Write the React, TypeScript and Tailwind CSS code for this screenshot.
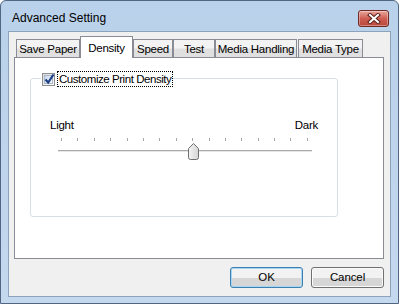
import React from "react";

const TABS = [
  { label: "Save Paper", w: "w-[64px]", ml: "ml-[2px]" },
  { label: "Density", w: "w-[53px]", ml: "ml-0", active: true },
  { label: "Speed", w: "w-[40px]", ml: "ml-0" },
  { label: "Test", w: "w-[42px]", ml: "ml-0" },
  { label: "Media Handling", w: "w-[82px]", ml: "ml-0" },
  { label: "Media Type", w: "w-[65px]", ml: "ml-px" },
];

const FONT = { fontFamily: '"Liberation Sans", Arial, sans-serif' };

function CloseButton() {
  return (
    <div className="flex h-[17px] w-[31px] items-center justify-center rounded-[3px] border border-[#6e2a24] bg-gradient-to-b from-[#e8a79e] via-[#cf5e52] to-[#b8463a] shadow-[inset_0_0_0_1px_rgba(255,255,255,0.35)]">
      <svg width="14" height="11" viewBox="0 0 14 11">
        <path d="M3 2 L11 9 M11 2 L3 9" stroke="#5a1f1a" strokeWidth="4" strokeLinecap="square" />
        <path d="M3 2 L11 9 M11 2 L3 9" stroke="#ffffff" strokeWidth="2" strokeLinecap="square" />
      </svg>
    </div>
  );
}

function Checkbox() {
  return (
    <div className="relative flex h-[13px] w-[13px] items-center justify-center border border-[#8e8f8f] bg-gradient-to-br from-[#dcdcdc] to-[#fbfbfb]">
      <div className="h-[9px] w-[9px] border border-[#a7b8cd] bg-gradient-to-br from-[#cbd9e8] to-[#f4f8fc]" />
      <svg width="11" height="12" viewBox="0 0 11 12" className="absolute left-px top-[-1px]">
        <path d="M1.5 6.5 L4.2 9.5 L9.5 1.5" fill="none" stroke="#1e3f86" strokeWidth="2.2" />
      </svg>
    </div>
  );
}

function Thumb() {
  return (
    <svg width="11" height="17" viewBox="0 0 11 17">
      <defs>
        <linearGradient id="th" x1="0" y1="0" x2="1" y2="0">
          <stop offset="0" stopColor="#f4f4f4" />
          <stop offset="1" stopColor="#d4d4d4" />
        </linearGradient>
      </defs>
      <path d="M5.5 0.5 L10.5 5.5 L10.5 14.5 Q10.5 16.5 8.5 16.5 L2.5 16.5 Q0.5 16.5 0.5 14.5 L0.5 5.5 Z" fill="url(#th)" stroke="#707070" />
    </svg>
  );
}

function Button({ label, primary }: { label: string; primary?: boolean }) {
  return (
    <div
      className={`flex h-[21px] w-[73px] items-center justify-center rounded-[3px] border bg-gradient-to-b from-[#f2f2f2] from-50% to-[#d6d6d6] to-50% text-[11.5px] tracking-[-0.1px] text-black ${
        primary
          ? "border-[#3c7fb1] shadow-[inset_0_0_0_1px_#a6d6f2]"
          : "border-[#707070] shadow-[inset_0_0_0_1px_#fbfbfb]"
      }`}
    >
      {label}
    </div>
  );
}

export default function App() {
  return (
    <div className="h-[304px] w-[399px] bg-white" style={FONT}>
      <div className="flex h-[304px] w-[399px] flex-col rounded-t-[6px] border border-[#4f6782] bg-gradient-to-b from-[#b9d1ea] to-[#c4d8ee] px-[7px] pb-[6px]">
        {/* title bar */}
        <div className="flex h-[30px] shrink-0 items-start justify-between pl-[4px] pr-[2px] pt-[9px]">
          <span className="text-[12px] leading-[16px] text-black">Advanced Setting</span>
          <CloseButton />
        </div>

        {/* client area */}
        <div className="flex flex-1 flex-col border border-[#8da2bb] bg-[#f0f0f0] pl-[5px] pr-[6px] pt-[4px] text-[11.5px] tracking-[-0.25px]">
          <div className="flex h-[21px] items-end whitespace-nowrap">
            {TABS.map((t) =>
              t.active ? (
                <div
                  key={t.label}
                  className={`${t.w} ${t.ml} relative z-10 -mb-px flex h-[22px] items-start justify-center border border-b-0 border-[#898c95] bg-white pt-[3px] leading-[16px] text-black`}
                >
                  {t.label}
                </div>
              ) : (
                <div
                  key={t.label}
                  className={`${t.w} ${t.ml} flex h-[18px] items-center justify-center border border-b-0 border-[#898c95] bg-gradient-to-b from-[#f3f3f3] from-45% to-[#e0e0e0] to-55% pt-px leading-[16px] text-black`}
                >
                  {t.label}
                </div>
              )
            )}
          </div>

          <div className="h-[202px] border border-[#898c95] bg-white pl-[15px] pt-[20px]">
            {/* group box */}
            <div className="relative h-[139px] w-[308px] rounded-[3px] border border-[#d5dfe5]">
              <div className="absolute left-[10px] top-[-8px] flex items-center bg-white pl-px">
                <Checkbox />
                <span className="ml-[2px] whitespace-nowrap border border-dotted border-black px-px text-[11.5px] leading-[14px] tracking-[-0.45px] text-black">
                  Customize Print Density
                </span>
              </div>

              <div className="flex justify-between px-[19px] pt-[38px] leading-[16px] text-black">
                <span>Light</span>
                <span>Dark</span>
              </div>

              <div className="relative ml-[27px] mt-[5px] w-[254px]">
                <div className="ml-[3px] flex h-[3px] w-[247px] justify-between">
                  {Array.from({ length: 16 }).map((_, i) => (
                    <div key={i} className="h-[3px] w-px bg-[#a7a7a7]" />
                  ))}
                </div>
                <div className="mt-[9px] h-[2px] w-[254px] border-t border-[#a9a9a9] bg-[#e6e6e6]" />
                <div className="absolute left-[130px] top-[5px]">
                  <Thumb />
                </div>
              </div>
            </div>
          </div>

          <div className="mt-[8px] flex justify-end gap-[8px]">
            <Button label="OK" primary />
            <Button label="Cancel" />
          </div>
        </div>
      </div>
    </div>
  );
}
